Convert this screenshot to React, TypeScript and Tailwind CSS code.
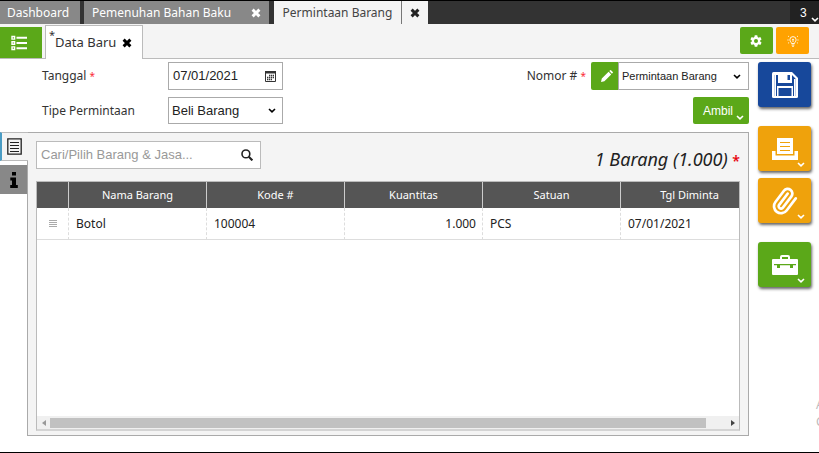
import type { ReactNode } from "react";

const columns = ["Nama Barang", "Kode #", "Kuantitas", "Satuan", "Tgl Diminta"];

function Cross({ className = "" }: { className?: string }) {
  return (
    <svg viewBox="0 0 10 10" className={`h-[10px] w-[10px] ${className}`} aria-hidden="true">
      <path d="M1.6 1.6l6.8 6.8M8.4 1.6L1.6 8.4" stroke="currentColor" strokeWidth="2.9" />
    </svg>
  );
}

function Chevron({ className = "" }: { className?: string }) {
  return (
    <svg viewBox="0 0 8 5" className={`h-[5px] w-2 ${className}`} aria-hidden="true">
      <path d="M1 1l3 2.8L7 1" fill="none" stroke="currentColor" strokeWidth="1.6" />
    </svg>
  );
}

function SideButton({ label, color, menu = true, children }: { label: string; color: string; menu?: boolean; children: ReactNode }) {
  return (
    <button
      type="button"
      aria-label={label}
      className={`relative flex h-[45px] w-[53px] items-center justify-center rounded-[3px] text-white shadow-[1px_2px_3px_#666] ${color}`}
    >
      {children}
      {menu && <Chevron className="absolute right-[6px] bottom-1" />}
    </button>
  );
}

function TopBar() {
  return (
    <nav className="flex h-6 items-stretch border-t border-black bg-[#333] text-xs/[22px] text-white">
      <button type="button" className="mr-1 w-20 bg-[#888] pr-1">Dashboard</button>
      <div className="mr-[5px] flex w-[185px] items-center justify-between bg-[#888] px-2">
        <button type="button">Pemenuhan Bahan Baku</button>
        <button type="button" aria-label="Tutup Pemenuhan Bahan Baku"><Cross /></button>
      </div>
      <div className="flex w-[154px] bg-[#f4f4f4] text-[#444]">
        <button type="button" className="flex-1 border-r border-[#777]">Permintaan Barang</button>
        <button type="button" aria-label="Tutup Permintaan Barang" className="flex w-[26px] items-center justify-center text-[#222]"><Cross /></button>
      </div>
      <button type="button" className="relative ml-auto w-[29px] bg-[#222] pl-[10px] text-left font-['Liberation_Sans',sans-serif] text-xs">
        3
        <Chevron className="absolute right-0 bottom-[2px]" />
      </button>
    </nav>
  );
}

function SubBar() {
  return (
    <div className="flex h-[35px] items-end border-b border-[#bbb] bg-[#f4f4f4]">
      <button type="button" aria-label="Daftar" className="mr-[3px] flex h-[31px] w-[42px] items-center justify-center bg-[#5ba819] text-white">
        <svg viewBox="0 0 16 16" className="-ml-1 h-4 w-4" fill="none" stroke="currentColor" aria-hidden="true">
          <path d="M1 1.5h2.6v2.6H1zM1 6.7h2.6v2.6H1zM1 11.9h2.6v2.6H1z" strokeWidth="1.4" />
          <path d="M5.5 2.8H16M5.5 8H16M5.5 13.2H16" strokeWidth="1.9" />
        </svg>
      </button>
      <div className="-mb-px flex h-[34px] w-[98px] items-center border border-b-0 border-[#bbb] bg-white pl-[3px] text-[13px] text-[#333]">
        <span className="self-start text-[11px]/[18px]">*</span>
        <button type="button" className="mr-[6px] whitespace-nowrap">Data Baru</button>
        <button type="button" aria-label="Tutup Data Baru" className="text-black"><Cross className="block" /></button>
      </div>
      <div className="mr-[10px] mb-1 ml-auto flex gap-[3px] text-white">
        <button type="button" aria-label="Pengaturan" className="flex h-[27px] w-[33px] items-center justify-center rounded-[2px] bg-[#5ba819]">
          <svg viewBox="0 0 12 12" className="mr-[2px] h-3 w-3" aria-hidden="true">
            <g fill="currentColor">
              <rect x="4.5" y="0.3" width="3" height="11.4" rx="0.6" />
              <rect x="4.5" y="0.3" width="3" height="11.4" rx="0.6" transform="rotate(60 6 6)" />
              <rect x="4.5" y="0.3" width="3" height="11.4" rx="0.6" transform="rotate(120 6 6)" />
              <circle cx="6" cy="6" r="4.3" />
            </g>
            <circle cx="6" cy="6" r="2" fill="#5ba819" />
          </svg>
        </button>
        <button type="button" aria-label="Petunjuk" className="flex h-[27px] w-[33px] items-center justify-center rounded-[2px] bg-[#ffa200]">
          <svg viewBox="0 0 12 12" className="h-3 w-3" fill="none" stroke="currentColor" strokeWidth="0.9" aria-hidden="true">
            <path d="M4.5 8.5C4.4 7.2 2.9 6.6 2.9 4.7a3.1 3.1 0 016.2 0c0 1.9-1.5 2.5-1.6 3.8zM4.6 10h2.8M5.1 11.3h1.8M6 4v3M5.2 4.4h1.6M1.9 1.7L1 1M10.1 1.7l.9-.7M.4 5h1.2M10.4 5h1.2M1.1 8.2l1-.7M10.9 8.2l-1-.7" />
          </svg>
        </button>
      </div>
    </div>
  );
}

function FormHeader() {
  return (
    <form className="flex justify-between pl-[42px] text-[#333]">
      <div className="grid grid-cols-[126px_115px] items-center gap-y-[7px] text-xs">
        <label htmlFor="tanggal">Tanggal <span className="text-[10px] text-red-500">*</span></label>
        <div className="flex h-7 items-center border border-[#aaa] bg-white pr-[6px]">
          <input id="tanggal" defaultValue="07/01/2021" className="w-full min-w-0 pl-1 font-['Liberation_Sans',sans-serif] text-[13px] text-[#222] outline-none" />
          <button type="button" aria-label="Pilih tanggal">
            <svg viewBox="0 0 11 12" className="h-3 w-[11px] text-[#333]" aria-hidden="true">
              <path d="M.5 1.5h10v10H.5z" fill="none" stroke="currentColor" />
              <path d="M0 1h11v2.5H0z" fill="currentColor" />
              <path d="M4 5.5h5M2 7.5h7M2 9.5h5" stroke="currentColor" strokeWidth="1.4" strokeDasharray="1.4 .6" />
            </svg>
          </button>
        </div>
        <label htmlFor="tipe">Tipe Permintaan</label>
        <div className="relative">
          <select id="tipe" className="block h-[27px] w-full appearance-none border border-[#aaa] bg-white pl-[3px] font-['Liberation_Sans',sans-serif] text-[13px] text-[#222]">
            <option>Beli Barang</option>
          </select>
          <Chevron className="pointer-events-none absolute top-[11px] right-[7px] text-black" />
        </div>
      </div>
      <div className="flex flex-col items-end gap-[7px]">
        <div className="flex items-center">
          <label htmlFor="nomor" className="mr-[5px] text-xs">Nomor # <span className="text-[10px] text-red-500">*</span></label>
          <button type="button" aria-label="Ubah nomor" className="flex h-7 w-[27px] items-center justify-center rounded-l-[2px] bg-[#5ba819] text-white">
            <svg viewBox="0 0 12 12" className="ml-1 h-3 w-3" fill="currentColor" aria-hidden="true">
              <path d="M0 12l.8-3.4L7.6 1.8l2.6 2.6-6.8 6.8zM8.3 1.1L9.2.2q.4-.4.8 0l1.8 1.8q.4.4 0 .8l-.9.9z" />
            </svg>
          </button>
          <div className="relative">
            <select id="nomor" className="block h-7 w-[131px] appearance-none border border-[#aaa] bg-white pl-[3px] font-['Liberation_Sans',sans-serif] text-[11px] text-[#222]">
              <option>Permintaan Barang</option>
            </select>
            <Chevron className="pointer-events-none absolute top-3 right-[8px] text-black" />
          </div>
        </div>
        <button type="button" className="relative h-[27px] w-14 rounded-[2px] bg-[#5ba819] pr-[6px] font-['Liberation_Sans',sans-serif] text-xs text-white">
          Ambil
          <Chevron className="absolute right-[5px] bottom-1" />
        </button>
      </div>
    </form>
  );
}

function ItemTable() {
  return (
    <div className="flex flex-1 flex-col overflow-hidden border border-b-2 border-[#bbb] border-b-[#d4d4d4] bg-white">
      <div className="flex-1 overflow-hidden">
        <table className="w-[722px] min-w-full table-fixed border-separate border-spacing-0 text-xs text-[#222]">
          <colgroup>
            <col className="w-8" />
            <col /><col /><col /><col /><col />
          </colgroup>
          <thead>
            <tr className="h-[26px] bg-[#555] text-[11px] text-white">
              <th aria-label="Urutan" className="border-r border-[#ccc]" />
              {columns.map((name) => (
                <th key={name} className="border-r border-[#ccc] p-0 font-normal">{name}</th>
              ))}
            </tr>
          </thead>
          <tbody>
            <tr className="h-8 [&>td]:border-r [&>td]:border-b [&>td]:border-[#ddd] [&>td]:[border-right-style:dashed]">
              <td className="p-0">
                <svg viewBox="0 0 8 7" className="mx-auto h-[7px] w-2" aria-hidden="true">
                  <path d="M0 .5h8M0 2.5h8M0 4.5h8M0 6.5h8" stroke="#aaa" />
                </svg>
              </td>
              <td className="px-[7px] py-0">Botol</td>
              <td className="px-[7px] py-0">100004</td>
              <td className="px-[6px] py-0 text-right">1.000</td>
              <td className="px-[7px] py-0">PCS</td>
              <td className="px-[7px] py-0">07/01/2021</td>
            </tr>
          </tbody>
        </table>
      </div>
      <div className="flex h-[13px] items-center bg-[#f0f0f0]">
        <button type="button" aria-label="Geser kiri" className="flex w-[13px] justify-center">
          <svg viewBox="0 0 4 6" className="h-[6px] w-1" aria-hidden="true"><path d="M4 0v6L0 3z" fill="#999" /></svg>
        </button>
        <div className="flex-1"><div className="h-[10px] w-[97%] bg-[#c1c1c1]" /></div>
        <button type="button" aria-label="Geser kanan" className="flex w-[13px] justify-center">
          <svg viewBox="0 0 4 6" className="h-[6px] w-1" aria-hidden="true"><path d="M0 0v6l4-3z" fill="#444" /></svg>
        </button>
      </div>
    </div>
  );
}

function Details() {
  return (
    <div className="mt-2 mb-4 flex flex-1">
      <div className="z-10 -mr-px flex w-7 flex-col">
        <button type="button" aria-label="Rincian barang" className="flex h-[29px] items-center justify-center border-y border-l-2 border-y-[#bbb] border-l-[#4a9cc4] bg-[#f4f4f4] pr-[2px]">
          <svg viewBox="0 0 15 17" className="h-[17px] w-[15px]" fill="none" stroke="#222" aria-hidden="true">
            <path d="M.8.8h13.4v15.4H.8z" strokeWidth="1.3" />
            <path d="M3 4.5h9M3 7.5h9M3 10.5h9M3 13.5h9" />
          </svg>
        </button>
        <button type="button" aria-label="Info lainnya" className="mt-1 mr-px flex h-[29px] items-center justify-center bg-[#888]">
          <svg viewBox="0 0 8 16" className="h-4 w-2" aria-hidden="true">
            <path d="M2 0h4v3.6H2zM.3 5.6H6V13h1.8v3H.2v-3H2V8.4H.3z" fill="#000" />
          </svg>
        </button>
      </div>
      <section className="flex min-w-0 flex-1 flex-col border border-[#aaa] bg-[#f4f4f4] px-2 pt-2 pb-1">
        <div className="mb-3 flex h-7 items-start justify-between">
          <div className="flex h-7 w-[225px] items-center border border-[#bbb] bg-white pr-[7px]">
            <input aria-label="Cari/Pilih Barang & Jasa" placeholder="Cari/Pilih Barang & Jasa..." className="w-full min-w-0 pl-1 font-['Liberation_Sans',sans-serif] text-[13px] outline-none placeholder:text-[#999]" />
            <button type="button" aria-label="Cari">
              <svg viewBox="0 0 12 12" className="h-3 w-3" fill="none" stroke="#222" aria-hidden="true">
                <circle cx="4.9" cy="4.9" r="3.9" strokeWidth="1.6" />
                <path d="M7.8 7.8l3.6 3.6" strokeWidth="2.1" />
              </svg>
            </button>
          </div>
          <h1 className="mt-2 text-lg/5 text-[#222] italic">1 Barang (1.000) <span className="text-sm/5 font-semibold text-red-600 not-italic">*</span></h1>
        </div>
        <ItemTable />
      </section>
    </div>
  );
}

function Actions() {
  return (
    <aside className="flex w-[53px] flex-col">
      <SideButton label="Simpan" color="bg-[#17489b]" menu={false}>
        <svg viewBox="0 0 26 26" className="h-[26px] w-[26px]" aria-hidden="true">
          <path d="M1.5 0H20l6 6v18.500q0 1.5-1.5 1.5h-23Q0 26 0 24.500v-23Q0 0 1.500 0z" fill="#fff" />
          <path d="M4 3h2v8h14V3l3.500 3.500V24H21V14H5v10H2.500V3z" fill="#17489b" />
          <path d="M15.500 3h2.500v5h-2.500zM6.500 16h13v8h-13z" fill="#17489b" />
          <path d="M2.500 3H4v21H2.500zM22 7h1.500v17H22z" fill="#fff" />
        </svg>
      </SideButton>
      <div className="mt-[19px] flex flex-col gap-[7px]">
        <SideButton label="Cetak" color="bg-[#efa20c]">
          <svg viewBox="0 0 26 22" className="h-[22px] w-[26px]" aria-hidden="true">
            <path d="M5 0h16v16H5zM0 13h3.500v4.500h19V13H26v9H0z" fill="#fff" />
            <path d="M8 4.500h10M8 8.500h10M8 12.500h10" stroke="#efa20c" strokeWidth="1.2" />
          </svg>
        </SideButton>
        <SideButton label="Lampiran" color="bg-[#efa20c]">
          <svg viewBox="0 0 24 24" className="h-7 w-7" fill="none" stroke="currentColor" strokeWidth="2.3" strokeLinecap="round" aria-hidden="true">
            <path d="M21.44 11.05l-9.19 9.19a6 6 0 01-8.49-8.49l8.57-8.57A4 4 0 1118 8.84l-8.59 8.57a2 2 0 01-2.83-2.83l8.49-8.48" transform="rotate(-8 12 12)" />
          </svg>
        </SideButton>
      </div>
      <div className="mt-[19px]">
        <SideButton label="Perkakas" color="bg-[#5ba819]">
          <svg viewBox="0 0 26 20" className="h-5 w-[26px]" aria-hidden="true">
            <path d="M8 4V2q0-2 2-2h6q2 0 2 2v2h7q1 0 1 1v14q0 1-1 1H1q-1 0-1-1V5q0-1 1-1zM10 4h6V2h-6z" fill="#fff" fillRule="evenodd" />
            <path d="M2 9h22v1.2h-3V13h-3v-2.800H8V13H5v-2.800H2z" fill="#5ba819" />
          </svg>
        </SideButton>
      </div>
    </aside>
  );
}

export default function App() {
  return (
    <div className="relative flex min-h-screen flex-col overflow-hidden border-b border-black bg-white font-['Noto_Sans','Open_Sans',sans-serif]">
      <TopBar />
      <SubBar />
      <main className="flex flex-1 gap-[9px] pt-[3px] pr-2">
        <div className="flex min-w-0 flex-1 flex-col">
          <FormHeader />
          <Details />
        </div>
        <Actions />
      </main>
      <div className="absolute top-[396px] left-full -ml-[3px] text-xs/[17px] whitespace-nowrap text-[#bbb]">
        <p>Activate Windows</p>
        <p>Go to Settings</p>
      </div>
    </div>
  );
}
